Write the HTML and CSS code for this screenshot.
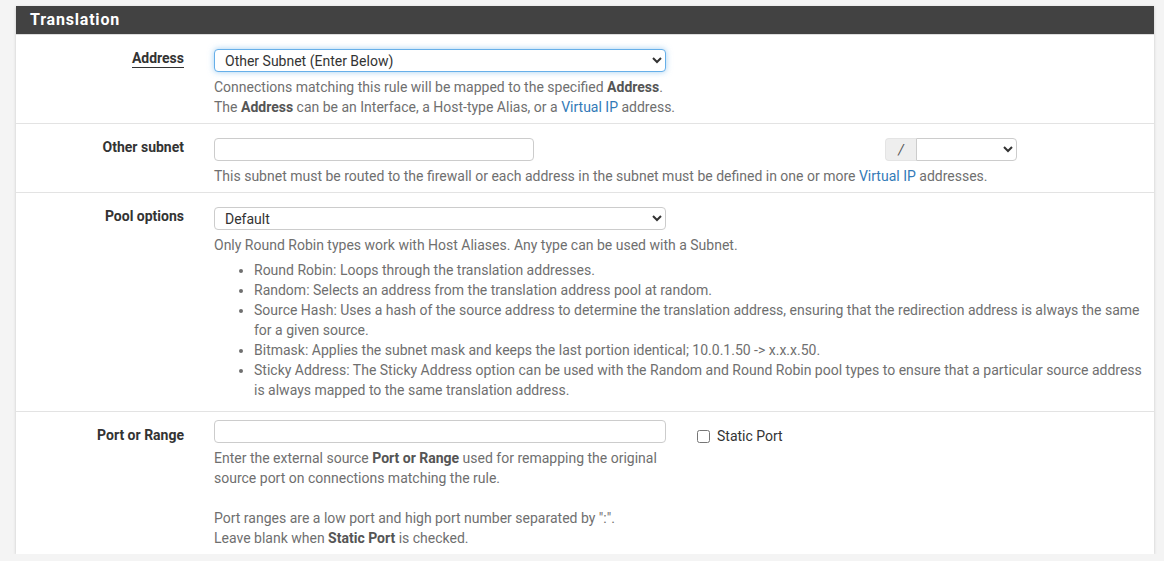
FILE: index.html
```html
<!DOCTYPE html>
<html lang="en">
<head>
  <meta charset="UTF-8" />
  <title>Firewall: NAT: Outbound: Edit</title>
  <meta name="viewport" content="width=device-width, initial-scale=1.0" />
  <link rel="stylesheet" href="styles.css">
</head>
<body>
  <div class="panel">
    <div class="panel-heading">Translation</div>
    <div class="panel-body">

      <div class="form-group">
        <label class="control-label"><span class="underline">Address</span></label>
        <div class="control wide">
          <select class="form-control focused">
            <option>Other Subnet (Enter Below)</option>
          </select>
          <div class="help">
            Connections matching this rule will be mapped to the specified <b>Address</b>.<br>
            The <b>Address</b> can be an Interface, a Host-type Alias, or a <a href="#">Virtual IP</a> address.
          </div>
        </div>
      </div>

      <div class="form-group">
        <label class="control-label">Other subnet</label>
        <div class="control wide">
          <div class="subnet-line">
            <input type="text" class="form-control subnet-input" />
            <div class="mask">
              <span class="addon">/</span>
              <select class="form-control mask-select">
                <option></option>
              </select>
            </div>
          </div>
          <div class="help">
            This subnet must be routed to the firewall or each address in the subnet must be defined in one or more <a href="#">Virtual IP</a> addresses.
          </div>
        </div>
      </div>

      <div class="form-group">
        <label class="control-label">Pool options</label>
        <div class="control wide">
          <select class="form-control narrow">
            <option>Default</option>
          </select>
          <div class="help">
            Only Round Robin types work with Host Aliases. Any type can be used with a Subnet.
            <ul>
              <li>Round Robin: Loops through the translation addresses.</li>
              <li>Random: Selects an address from the translation address pool at random.</li>
              <li>Source Hash: Uses a hash of the source address to determine the translation address, ensuring that the redirection address is always the same for a given source.</li>
              <li>Bitmask: Applies the subnet mask and keeps the last portion identical; 10.0.1.50 -&gt; x.x.x.50.</li>
              <li>Sticky Address: The Sticky Address option can be used with the Random and Round Robin pool types to ensure that a particular source address is always mapped to the same translation address.</li>
            </ul>
          </div>
        </div>
      </div>

      <div class="form-group port-row">
        <label class="control-label">Port or Range</label>
        <div class="control narrow">
          <input type="text" class="form-control" />
          <div class="help">
            Enter the external source <b>Port or Range</b> used for remapping the original source port on connections matching the rule.<br><br>
            Port ranges are a low port and high port number separated by ":".<br>
            Leave blank when <b>Static Port</b> is checked.
          </div>
        </div>
        <label class="checkbox">
          <input type="checkbox" /> Static Port
        </label>
      </div>

    </div>
  </div>
</body>
</html>
```

FILE: styles.css
```css
body {
  margin: 0;
  padding: 6px 10px 0 16px;
  background: #f4f4f4;
  font-family: Roboto, "Liberation Sans", sans-serif;
  font-size: 14px;
  line-height: 20px;
  color: #333;
}
a {
  color: #337ab7;
  text-decoration: none;
}
.panel {
  width: 1138px;
  background: #fff;
  box-shadow: 0 1px 3px rgba(0,0,0,0.18);
}
.panel-heading {
  background: #424242;
  color: #fff;
  font-size: 16px;
  font-weight: 700;
  letter-spacing: 0.8px;
  height: 28px;
  line-height: 28px;
  padding: 0 14px;
  border-bottom: 1px solid #ddd;
}
.form-group {
  display: flex;
  align-items: flex-start;
  padding: 14px 0 6px;
  border-bottom: 1px solid #e3e3e3;
}
.form-group:last-child {
  border-bottom: none;
}
.control-label {
  width: 168px;
  flex: none;
  text-align: right;
  font-weight: 700;
  margin-top: -1px;
  margin-right: 30px;
}
.underline {
  border-bottom: 1px solid #333;
  padding-bottom: 1px;
}
.control.wide {
  width: 932px;
}
.control.narrow {
  width: 452px;
}
.form-control {
  display: block;
  box-sizing: border-box;
  height: 23px;
  padding: 0 6px;
  font-family: inherit;
  font-size: 14px;
  color: #333;
  background: #fff;
  border: 1px solid #ccc;
  border-radius: 4px;
  width: 452px;
}
input.form-control {
  width: 100%;
}
.control.wide > select.form-control {
  width: 452px;
}
.form-control.focused {
  border-color: #66afe9;
  box-shadow: 0 0 6px rgba(102,175,233,0.6);
}
.help {
  margin-top: 5px;
  color: #6f6f6f;
}
.help b {
  color: #555;
}
.help ul {
  margin: 5px 0 5px;
  padding-left: 40px;
}
.subnet-line {
  display: flex;
  justify-content: space-between;
  width: 803px;
}
input.subnet-input {
  width: 320px;
}
.mask {
  display: flex;
}
.addon {
  box-sizing: border-box;
  width: 31px;
  height: 23px;
  line-height: 23px;
  text-align: center;
  background: #eee;
  color: #555;
  font-style: italic;
  border: 1px solid #e4e4e4;
  border-right: none;
  border-radius: 4px 0 0 4px;
}
.form-control.mask-select {
  width: 101px;
  border-radius: 0 4px 4px 0;
}
.port-row {
  padding-top: 8px;
}
.port-row .control-label {
  margin-top: 5px;
}
.checkbox {
  display: flex;
  align-items: center;
  margin-left: 31px;
  margin-top: 6px;
  color: #333;
  line-height: 20px;
}
.checkbox input {
  width: 13px;
  height: 13px;
  margin: 0 7px 0 0;
}
```
